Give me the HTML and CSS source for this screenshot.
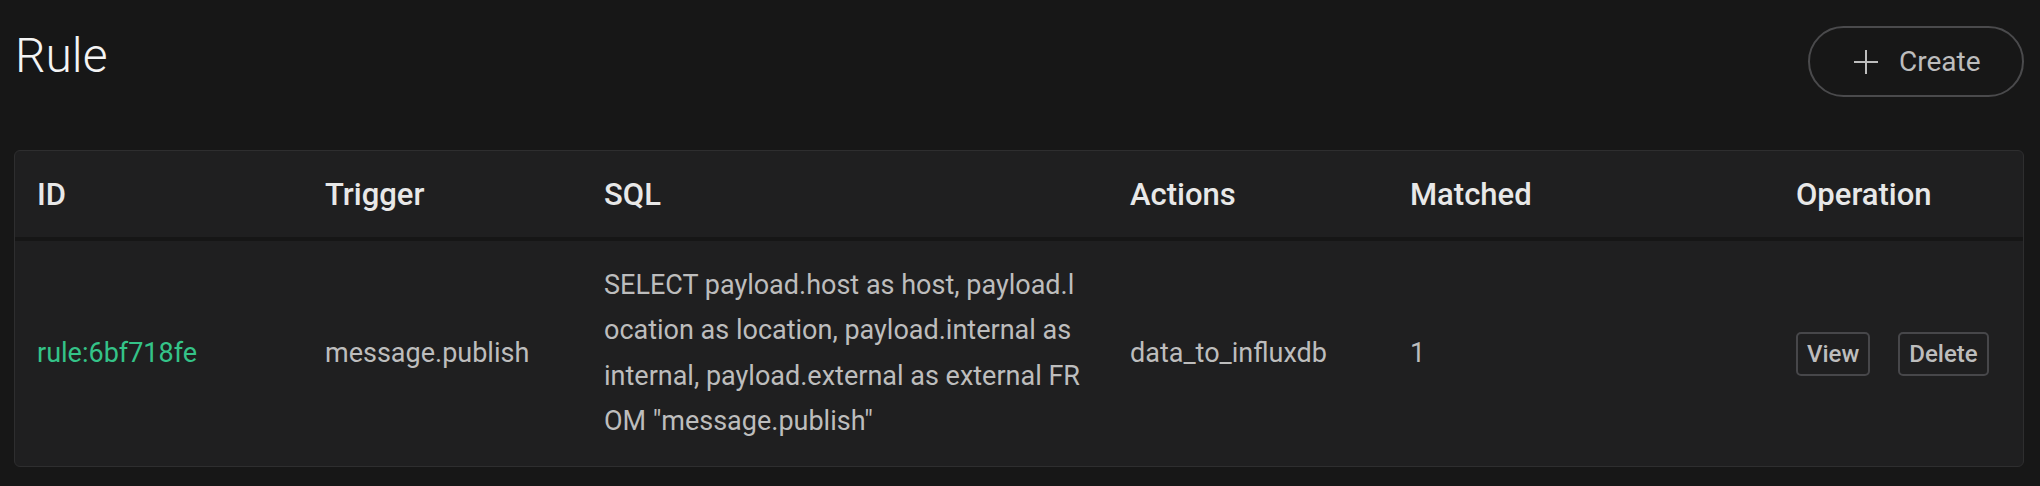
FILE: index.html
```html
<!DOCTYPE html>
<html>
<head>
<meta charset="utf-8">
<link rel="stylesheet" href="styles.css">
</head>
<body>
<div class="page">
  <div class="top">
    <h1 class="title">Rule</h1>
    <button class="create">
      <svg class="plus" width="24" height="24" viewBox="0 0 24 24"><path d="M12 0V24M0 12H24" stroke="#bdbdbd" stroke-width="2" fill="none"/></svg>
      <span>Create</span>
    </button>
  </div>
  <div class="card">
    <table class="tbl">
      <colgroup>
        <col class="c1"><col class="c2"><col class="c3"><col class="c4"><col class="c5"><col class="c6">
      </colgroup>
      <thead>
        <tr><th>ID</th><th>Trigger</th><th>SQL</th><th>Actions</th><th>Matched</th><th>Operation</th></tr>
      </thead>
      <tbody>
        <tr>
          <td class="id">rule:6bf718fe</td>
          <td>message.publish</td>
          <td class="sql">SELECT payload.host as host, payload.l<br>ocation as location, payload.internal as<br>internal, payload.external as external FR<br>OM "message.publish"</td>
          <td>data_to_influxdb</td>
          <td>1</td>
          <td class="ops"><button class="btn">View</button><button class="btn">Delete</button></td>
        </tr>
      </tbody>
    </table>
  </div>
</div>
</body>
</html>
```
FILE: styles.css
```css
html, body {
  margin: 0;
  padding: 0;
  background: #171717;
}
body {
  font-family: Roboto, "Liberation Sans", sans-serif;
  color: #bdbdbd;
}
.page {
  padding: 26px 16px 0 14px;
}
.top {
  display: flex;
  justify-content: space-between;
  align-items: flex-start;
  height: 124px;
}
.title {
  margin: 0;
  padding: 0 0 0 1px;
  font-weight: 300;
  font-size: 48px;
  line-height: 60px;
  color: #f4f4f4;
}
.create {
  display: flex;
  align-items: center;
  gap: 21px;
  height: 71px;
  width: 216px;
  box-sizing: border-box;
  padding: 0 0 0 44px;
  border: 2px solid #4a4a4c;
  border-radius: 36px;
  background: transparent;
  font-family: Roboto, "Liberation Sans", sans-serif;
  font-size: 28px;
  color: #bdbdbd;
}
.plus { display: block; }
.card {
  background: #1f1f20;
  border: 1px solid #2e2e2f;
  border-radius: 6px;
  overflow: hidden;
}
.tbl {
  width: 100%;
  border-collapse: collapse;
  table-layout: fixed;
}
.c1 { width: 288px; }
.c2 { width: 279px; }
.c3 { width: 526px; }
.c4 { width: 280px; }
.c5 { width: 386px; }
.c6 { width: auto; }
th {
  text-align: left;
  font-weight: 500;
  font-size: 31px;
  color: #e8e8e8;
  height: 86px;
  padding: 0 22px;
  border-bottom: 4px solid #161616;
}
td {
  font-size: 27px;
  line-height: 45.5px;
  color: #bdbdbd;
  padding: 0 22px;
  height: 225px;
  vertical-align: middle;
  font-weight: 400;
}
td.id { color: #34c388; }
td.sql { white-space: nowrap; padding-right: 0; }
.ops { white-space: nowrap; }
.btn {
  height: 44px;
  padding: 0 9px;
  margin-right: 28px;
  border: 2px solid #47474a;
  border-radius: 5px;
  background: transparent;
  font-family: Roboto, "Liberation Sans", sans-serif;
  font-size: 24px;
  font-weight: 500;
  color: #bdbdbd;
  vertical-align: middle;
}
```
